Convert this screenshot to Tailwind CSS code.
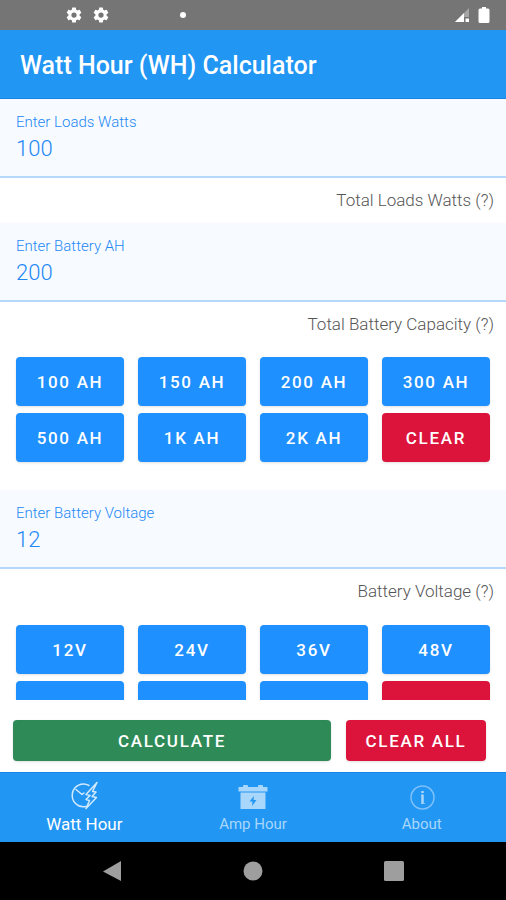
<!DOCTYPE html>
<html lang="en">
<head>
  <meta charset="UTF-8" />
  <meta name="viewport" content="width=device-width, initial-scale=1" />
  <title>Watt Hour (WH) Calculator</title>
  <script src="https://cdn.jsdelivr.net/npm/@tailwindcss/browser@4"></script>
  <style>
    body {
      font-family: Roboto, 'Liberation Sans', sans-serif;
    }
  </style>
</head>
<body class="bg-white h-screen flex flex-col">
  <!-- Status bar -->
  <div class="bg-[#757575] h-[30px] shrink-0 flex items-center justify-between pl-[65px] pr-4 text-white">
    <div class="flex items-center gap-[9px]">
      <svg class="size-[18px]" viewBox="0 0 24 24" fill="currentColor"><path d="M19.43 12.98c.04-.32.07-.64.07-.98s-.03-.66-.07-.98l2.11-1.65c.19-.15.24-.42.12-.64l-2-3.46c-.12-.22-.39-.3-.61-.22l-2.49 1c-.52-.4-1.08-.73-1.69-.98l-.38-2.65A.49.49 0 0 0 14 2h-4c-.25 0-.46.18-.49.42l-.38 2.65c-.61.25-1.17.59-1.69.98l-2.49-1c-.23-.09-.49 0-.61.22l-2 3.46c-.13.22-.07.49.12.64l2.11 1.65c-.04.32-.07.65-.07.98s.03.66.07.98l-2.11 1.65c-.19.15-.24.42-.12.64l2 3.46c.12.22.39.3.61.22l2.49-1c.52.4 1.08.73 1.69.98l.38 2.65c.03.24.24.42.49.42h4c.25 0 .46-.18.49-.42l.38-2.65c.61-.25 1.17-.59 1.69-.98l2.49 1c.23.09.49 0 .61-.22l2-3.46c.12-.22.07-.49-.12-.64l-2.11-1.65zM12 15.5a3.5 3.5 0 1 1 0-7 3.5 3.5 0 0 1 0 7z" /></svg>
      <svg class="size-[18px]" viewBox="0 0 24 24" fill="currentColor"><path d="M19.43 12.98c.04-.32.07-.64.07-.98s-.03-.66-.07-.98l2.11-1.65c.19-.15.24-.42.12-.64l-2-3.46c-.12-.22-.39-.3-.61-.22l-2.49 1c-.52-.4-1.08-.73-1.69-.98l-.38-2.65A.49.49 0 0 0 14 2h-4c-.25 0-.46.18-.49.42l-.38 2.65c-.61.25-1.17.59-1.69.98l-2.49-1c-.23-.09-.49 0-.61.22l-2 3.46c-.13.22-.07.49.12.64l2.11 1.65c-.04.32-.07.65-.07.98s.03.66.07.98l-2.11 1.65c-.19.15-.24.42-.12.64l2 3.46c.12.22.39.3.61.22l2.49-1c.52.4 1.08.73 1.69.98l.38 2.65c.03.24.24.42.49.42h4c.25 0 .46-.18.49-.42l.38-2.65c.61-.25 1.17-.59 1.69-.98l2.49 1c.23.09.49 0 .61-.22l2-3.46c.12-.22.07-.49-.12-.64l-2.11-1.65zM12 15.5a3.5 3.5 0 1 1 0-7 3.5 3.5 0 0 1 0 7z" /></svg>
      <span class="ml-[61px] size-[6px] rounded-full bg-white"></span>
    </div>
    <div class="flex items-center gap-2">
      <svg class="size-4" viewBox="0 0 16 16" fill="currentColor"><path d="M15 1v9h-5v5H1z" fill-opacity=".35" /><path d="M10 6v9H1z" /><path d="M11.500 11.500h3.500v3.500h-3.500z" /></svg>
      <svg class="w-3 h-[18px]" viewBox="0 0 12 18" fill="currentColor"><path d="M4 1h4v1.500h2q1.500 0 1.500 1.500v11.500q0 1.500-1.500 1.500H2q-1.500 0-1.500-1.500V4Q.5 2.500 2 2.500h2z" /></svg>
    </div>
  </div>

  <header class="bg-[#2196f3] h-[69px] shrink-0 flex items-center px-5 pt-1 border-b border-[#1585e5]">
    <h1 class="text-white text-[25px] font-medium">Watt Hour (WH) Calculator</h1>
  </header>

  <main class="flex-1 min-h-0 overflow-y-auto [scrollbar-width:none]">
    <div class="bg-[#f7fbff] border-b-2 border-[#b5d8fb] px-4 pt-3 pb-3 text-[#1e88f5]">
      <label for="loads" class="block text-[15px] leading-[22px] font-light">Enter Loads Watts</label>
      <input type="text" id="loads" value="100" class="block w-full text-[22px] leading-[31px] font-light outline-none" />
    </div>
    <p class="px-3 h-[45px] leading-[45px] text-right text-[17px] font-light text-[#555]">Total Loads Watts (?)</p>

    <div class="bg-[#f7fbff] border-b-2 border-[#b5d8fb] px-4 pt-3 pb-3 text-[#1e88f5]">
      <label for="battery" class="block text-[15px] leading-[22px] font-light">Enter Battery AH</label>
      <input type="text" id="battery" value="200" class="block w-full text-[22px] leading-[31px] font-light outline-none" />
    </div>
    <p class="px-3 h-[45px] leading-[45px] text-right text-[17px] font-light text-[#555]">Total Battery Capacity (?)</p>

    <div class="grid grid-cols-4 gap-x-[14px] gap-y-[7px] px-4 pt-[10px] pb-7 text-white text-[17px] font-medium tracking-widest">
      <button class="h-[49px] pt-[2px] rounded bg-[#1e90ff] shadow">100 AH</button>
      <button class="h-[49px] pt-[2px] rounded bg-[#1e90ff] shadow">150 AH</button>
      <button class="h-[49px] pt-[2px] rounded bg-[#1e90ff] shadow">200 AH</button>
      <button class="h-[49px] pt-[2px] rounded bg-[#1e90ff] shadow">300 AH</button>
      <button class="h-[49px] pt-[2px] rounded bg-[#1e90ff] shadow">500 AH</button>
      <button class="h-[49px] pt-[2px] rounded bg-[#1e90ff] shadow">1K AH</button>
      <button class="h-[49px] pt-[2px] rounded bg-[#1e90ff] shadow">2K AH</button>
      <button class="h-[49px] pt-[2px] rounded bg-[#dc143c] shadow">CLEAR</button>
    </div>

    <div class="bg-[#f7fbff] border-b-2 border-[#b5d8fb] px-4 pt-3 pb-3 text-[#1e88f5]">
      <label for="voltage" class="block text-[15px] leading-[22px] font-light">Enter Battery Voltage</label>
      <input type="text" id="voltage" value="12" class="block w-full text-[22px] leading-[31px] font-light outline-none" />
    </div>
    <p class="px-3 h-[45px] leading-[45px] text-right text-[17px] font-light text-[#555]">Battery Voltage (?)</p>

    <div class="grid grid-cols-4 gap-x-[14px] gap-y-[7px] px-4 pt-[11px] pb-7 text-white text-[17px] font-medium tracking-widest">
      <button class="h-[49px] pt-[2px] rounded bg-[#1e90ff] shadow">12V</button>
      <button class="h-[49px] pt-[2px] rounded bg-[#1e90ff] shadow">24V</button>
      <button class="h-[49px] pt-[2px] rounded bg-[#1e90ff] shadow">36V</button>
      <button class="h-[49px] pt-[2px] rounded bg-[#1e90ff] shadow">48V</button>
      <button aria-label="60V" class="h-[49px] rounded bg-[#1e90ff] shadow"></button>
      <button aria-label="72V" class="h-[49px] rounded bg-[#1e90ff] shadow"></button>
      <button aria-label="96V" class="h-[49px] rounded bg-[#1e90ff] shadow"></button>
      <button aria-label="Clear" class="h-[49px] rounded bg-[#dc143c] shadow"></button>
    </div>
  </main>

  <div class="shrink-0 flex gap-[15px] pl-[13px] pr-5 pt-5 pb-[11px] text-white text-[17px] font-medium tracking-widest">
    <button class="flex-1 h-[41px] pt-[3px] rounded bg-[#2e8b57] shadow">CALCULATE</button>
    <button class="w-[140px] h-[41px] pt-[3px] rounded bg-[#dc143c] shadow">CLEAR ALL</button>
  </div>

  <nav class="bg-[#2196f3] h-[70px] shrink-0 grid grid-cols-3 border-t border-[#1585e5] text-[#a9d6fb] text-[15px] leading-5">
    <a href="#" class="flex flex-col items-center pt-2 text-white text-[17px]">
      <svg class="size-[30px] mb-[3px]" viewBox="0 0 30 30" fill="none" stroke="#d3eafd" stroke-width="1.500" stroke-linejoin="round" stroke-linecap="round"><path d="M20 4.500A11.300 11.300 0 1 0 16.500 25.500" /><path d="M7 8.500l6 5 2-1.500" /><path d="M28 1.500L17 13.500l4 1-4 4 3.500 1L17 27.500l10.500-11-4.500-1 4-4.500-3.500-.5z" /></svg>
      Watt Hour
    </a>
    <a href="#" class="flex flex-col items-center pt-2">
      <svg class="size-[30px] mb-[3px]" viewBox="0 0 30 30" fill="currentColor"><path d="M5 5q0-1 1-1h3q1 0 1 1v1h10V5q0-1 1-1h3q1 0 1 1v1h4.500v4.500H.5V6H5zM2.500 11.500h25V28h-25z" /><path d="M16 15l-4.500 5.500h3L14 25l4.500-6h-3z" fill="#2196f3" /></svg>
      Amp Hour
    </a>
    <a href="#" class="flex flex-col items-center pt-2">
      <svg class="size-[30px] mb-[3px]" viewBox="0 0 30 30" fill="none" stroke="#7fc1f8"><circle cx="15.500" cy="16.500" r="11.500" stroke-width="1.500" /><path d="M14 14h1.500M14 22.500h4" stroke-width="1" /><path d="M15.500 13.500v9M15.500 10v2" stroke="#a9d6fb" stroke-width="2.500" /></svg>
      About
    </a>
  </nav>

  <!-- System navigation -->
  <div class="bg-black h-[58px] shrink-0 flex items-center justify-center gap-[121px] text-[#9e9e9e]">
    <svg class="size-5" viewBox="0 0 20 20" fill="currentColor"><path d="M19 0v20L1 10.500z" /></svg>
    <svg class="size-5" viewBox="0 0 20 20" fill="currentColor"><circle cx="10" cy="10" r="9.500" /></svg>
    <svg class="size-5" viewBox="0 0 20 20" fill="currentColor"><rect width="20" height="20" rx="1.500" /></svg>
  </div>
</body>
</html>
